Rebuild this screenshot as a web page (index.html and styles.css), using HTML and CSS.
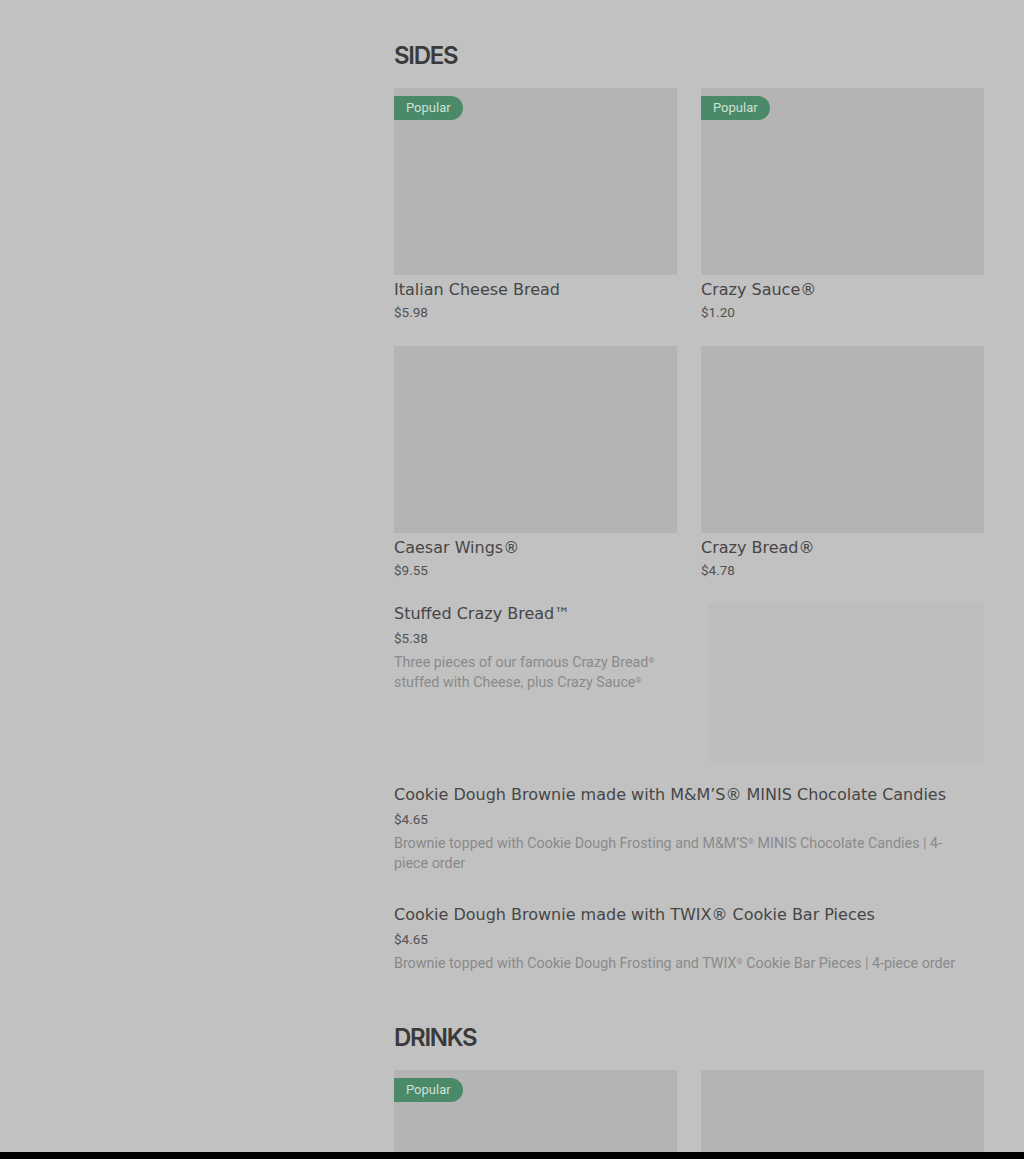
FILE: index.html
```html
<!DOCTYPE html>
<html lang="en">
<head>
  <meta charset="UTF-8"/>
  <meta name="viewport" content="width=device-width, initial-scale=1.0"/>
  <title>Menu</title>
  <link rel="stylesheet" href="styles.css">
</head>
<body>

  <div class="page">
    <aside class="sidebar"></aside>

    <main class="menu">

      <section class="section">
        <h2 class="section-title">SIDES</h2>

        <div class="grid">
          <div class="card">
            <div class="card-img"><span class="badge">Popular</span></div>
            <div class="item-name">Italian Cheese Bread</div>
            <div class="item-price">$5.98</div>
          </div>
          <div class="card">
            <div class="card-img"><span class="badge">Popular</span></div>
            <div class="item-name">Crazy Sauce®</div>
            <div class="item-price">$1.20</div>
          </div>
          <div class="card">
            <div class="card-img"></div>
            <div class="item-name">Caesar Wings®</div>
            <div class="item-price">$9.55</div>
          </div>
          <div class="card">
            <div class="card-img"></div>
            <div class="item-name">Crazy Bread®</div>
            <div class="item-price">$4.78</div>
          </div>
        </div>

        <div class="list">
          <div class="row">
            <div class="row-text">
              <div class="item-name">Stuffed Crazy Bread™</div>
              <div class="item-price">$5.38</div>
              <p class="item-desc">Three pieces of our famous Crazy Bread<span class="reg">®</span> stuffed with Cheese, plus Crazy Sauce<span class="reg">®</span></p>
            </div>
            <div class="row-img"></div>
          </div>
          <div class="row">
            <div class="row-text">
              <div class="item-name">Cookie Dough Brownie made with M&amp;M’S® MINIS Chocolate Candies</div>
              <div class="item-price">$4.65</div>
              <p class="item-desc">Brownie topped with Cookie Dough Frosting and M&amp;M’S<span class="reg">®</span> MINIS Chocolate Candies | 4-piece order</p>
            </div>
          </div>
          <div class="row">
            <div class="row-text">
              <div class="item-name">Cookie Dough Brownie made with TWIX® Cookie Bar Pieces</div>
              <div class="item-price">$4.65</div>
              <p class="item-desc">Brownie topped with Cookie Dough Frosting and TWIX<span class="reg">®</span> Cookie Bar Pieces | 4-piece order</p>
            </div>
          </div>
        </div>
      </section>

      <section class="section">
        <h2 class="section-title">DRINKS</h2>

        <div class="grid">
          <div class="card">
            <div class="card-img"><span class="badge">Popular</span></div>
          </div>
          <div class="card">
            <div class="card-img"></div>
          </div>
        </div>
      </section>

    </main>
  </div>

  <div class="bottom-bar"></div>

</body>
</html>
```

FILE: styles.css
```css
* {
  box-sizing: border-box;
  margin: 0;
  padding: 0;
}

body {
  background-color: #c1c1c1;
  color: #444;
  font-family: 'DejaVu Sans', sans-serif;
  overflow: hidden;
  height: 100vh;
}

.page {
  display: flex;
}

.sidebar {
  width: 394px;
  flex-shrink: 0;
}

.menu {
  width: 590px;
}

.section {
  padding-top: 40px;
}

.section-title {
  font-family: 'Inter', sans-serif;
  font-size: 24px;
  line-height: 32px;
  font-weight: 600;
  letter-spacing: -1.3px;
  color: #3a3a3a;
  margin-bottom: 16px;
}

/* Two column cards */
.grid {
  display: grid;
  grid-template-columns: 283px 283px;
  column-gap: 24px;
  row-gap: 24px;
}

.card-img {
  position: relative;
  height: 187px;
  background: #b4b4b4;
}

.badge {
  position: absolute;
  top: 8px;
  left: 0;
  height: 24px;
  line-height: 24px;
  padding: 0 12px;
  border-radius: 0 12px 12px 0;
  background: #4a8a69;
  color: #cfe0d6;
  font-family: 'Roboto', sans-serif;
  font-size: 13px;
}

.item-name {
  font-size: 16px;
  line-height: 22px;
  color: #464646;
}

.card .item-name {
  margin-top: 4px;
}

.item-price {
  font-family: 'Roboto', sans-serif;
  font-size: 13.5px;
  line-height: 20px;
  color: #525252;
  margin-top: 1px;
}

.row .item-price {
  margin-top: 3px;
}

.item-desc {
  font-family: 'Roboto', sans-serif;
  font-size: 14.3px;
  line-height: 20px;
  color: #8a8a8a;
  margin-top: 4px;
  max-width: 574px;
}

.reg {
  font-size: 8px;
  line-height: 0;
  vertical-align: 4px;
}

/* List rows */
.list {
  display: flex;
  flex-direction: column;
  gap: 22px;
  margin-top: 23px;
}

.row {
  display: flex;
  gap: 18px;
}

.row-text {
  flex: 1;
  padding-bottom: 9px;
}

.row-img {
  width: 276px;
  height: 159px;
  flex-shrink: 0;
  background: #bdbdbd;
  border: 1px solid #bfbfbf;
}

.bottom-bar {
  position: fixed;
  left: 0;
  right: 0;
  bottom: 0;
  height: 7px;
  background: #000;
}
```
